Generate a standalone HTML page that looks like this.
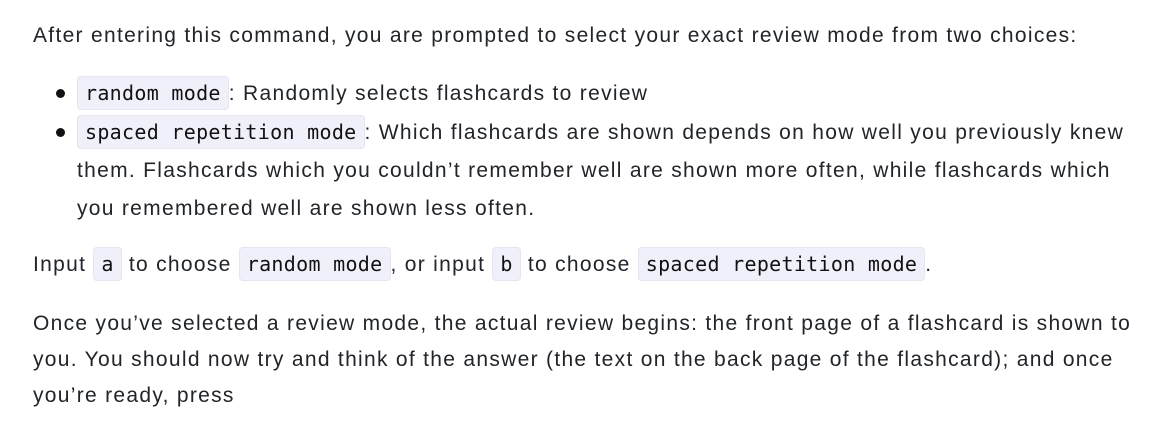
<!DOCTYPE html>
<html><head><style>
body{margin:0;background:#fff;color:#212529;font-family:"Liberation Sans",sans-serif;font-size:21px;letter-spacing:1.3px;}
.w{position:absolute;left:33px;top:0;width:1120px;}
p{margin:0;}
code{font-family:"DejaVu Sans Mono","Liberation Mono",monospace;font-size:20px;letter-spacing:0.3px;background:#f0f0fb;border:1px solid #e6e6f0;border-radius:4px;padding:4px 7px;color:#111;}
ul{margin:0;padding-left:44px;list-style:none;}
li{line-height:38px;position:relative;}
li:before{content:"";position:absolute;left:-21px;top:15px;width:9px;height:9px;border-radius:50%;background:#111;}
</style></head><body>
<div class="w">
<p style="position:absolute;top:17px;line-height:38px;white-space:nowrap">After entering this command, you are prompted to select your exact review mode from two choices:</p>
<ul style="position:absolute;top:74px;width:1052px">
<li><code>random mode</code>: Randomly selects flashcards to review</li>
<li><code>spaced repetition mode</code>: Which flashcards are shown depends on how well you previously knew them. Flashcards which you couldn’t remember well are shown more often, while flashcards which you remembered well are shown less often.</li>
</ul>
<p style="position:absolute;top:245px;line-height:38px;white-space:nowrap">Input <code>a</code> to choose <code>random mode</code>, or input <code>b</code> to choose <code>spaced repetition mode</code>.</p>
<p style="position:absolute;top:306px;line-height:36px;width:1110px">Once you’ve selected a review mode, the actual review begins: the front page of a flashcard is shown to you. You should now try and think of the answer (the text on the back page of the flashcard); and once you’re ready, press</p>
</div>
</body></html>
